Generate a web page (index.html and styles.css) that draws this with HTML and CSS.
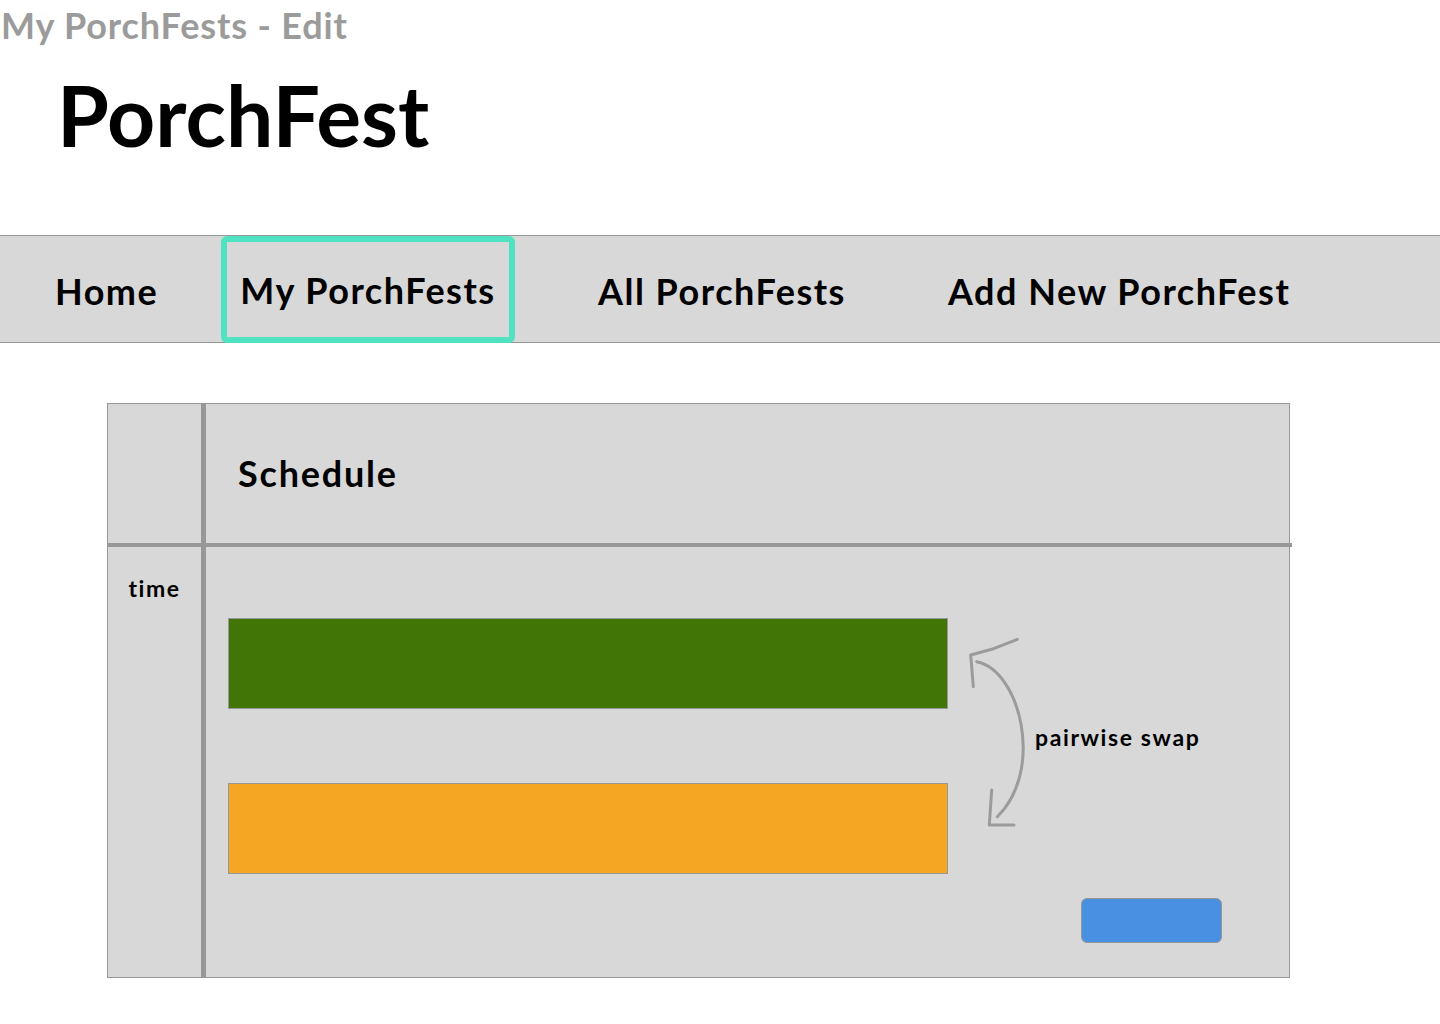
FILE: index.html
```html
<!DOCTYPE html>
<html>
<head>
<meta charset="utf-8">
<title>My PorchFests - Edit</title>
<link rel="stylesheet" href="styles.css">
</head>
<body>
<div class="page-label">My PorchFests - Edit</div>
<h1 class="brand">PorchFest</h1>
<nav class="nav">
  <a class="nav-item nav-home">Home</a>
  <a class="nav-item nav-mine active">My PorchFests</a>
  <a class="nav-item nav-all">All PorchFests</a>
  <a class="nav-item nav-add">Add New PorchFest</a>
</nav>
<section class="card">
  <div class="card-head">
    <div class="side-cell"></div>
    <div class="main-cell head-cell"><h2 class="card-title">Schedule</h2></div>
  </div>
  <div class="card-body">
    <div class="side-cell"><span class="time-label">time</span></div>
    <div class="main-cell body-cell">
      <div class="swap-row">
        <div class="bars">
          <div class="slot slot-green"></div>
          <div class="slot slot-orange"></div>
        </div>
        <svg class="swap-arrow" width="70" height="205" viewBox="0 0 70 205" fill="none" stroke="#9b9b9b" stroke-width="3" stroke-linecap="round" stroke-linejoin="round">
          <path d="M16.7 31.7 C60 40, 85 140, 37.3 186.7"/>
          <path d="M13.3 56.7 L10.7 25 L31.7 19.3 L57.3 9.3"/>
          <path d="M31.7 160 L29.3 195 L54 195"/>
        </svg>
        <span class="swap-label">pairwise swap</span>
      </div>
      <div class="actions">
        <button class="save-btn" type="button"></button>
      </div>
    </div>
  </div>
</section>
</body>
</html>
```

FILE: styles.css
```css
html, body {
  margin: 0;
  padding: 0;
  background: #ffffff;
}
body {
  font-family: Lato, "Open Sans", sans-serif;
  font-weight: 700;
  color: #000;
  width: 1440px;
}
.page-label {
  color: #9b9b9b;
  font-size: 36px;
  line-height: 43px;
  margin: 4px 0 0 1px;
  letter-spacing: 0.85px;
  white-space: nowrap;
}
.brand {
  font-size: 84px;
  line-height: 101px;
  font-weight: 700;
  margin: 17px 0 0 57px;
  letter-spacing: 0;
}
.nav {
  margin-top: 70px;
  height: 106px;
  background: #d8d8d8;
  border-top: 1px solid #979797;
  border-bottom: 1px solid #979797;
  display: flex;
  align-items: stretch;
}
.nav-item {
  display: flex;
  align-items: center;
  padding-top: 4px;
  font-size: 36px;
  color: #000;
  box-sizing: border-box;
  white-space: nowrap;
  letter-spacing: 1.5px;
}
.nav-home { margin-left: 55px; width: 103px; }
.nav-mine { margin-left: 63px; }
.nav-all { margin-left: 83px; width: 242px; }
.nav-add { margin-left: 108px; width: 342px; }
.active {
  border: 6px solid #50e3c2;
  border-radius: 6px;
  padding: 0 4px;
  margin-bottom: -1px;
  width: 294px;
  justify-content: center;
}
.card {
  margin: 60px 0 0 107px;
  width: 1183px;
  height: 575px;
  box-sizing: border-box;
  background: #d8d8d8;
  border: 1px solid #979797;
  display: flex;
  flex-direction: column;
}
.card-head {
  display: flex;
  height: 139px;
  border-bottom: 4px solid #979797;
  margin-right: -3px;
}
.card-body {
  display: flex;
  flex: 1;
}
.side-cell {
  width: 93px;
  flex: none;
  border-right: 5px solid #979797;
  display: flex;
  justify-content: center;
}
.main-cell {
  flex: 1;
}
.head-cell {
  display: flex;
  align-items: center;
  padding: 0 0 2px 32px;
}
.card-title {
  margin: 0;
  font-size: 36px;
  font-weight: 700;
  letter-spacing: 1.8px;
}
.time-label {
  font-size: 23px;
  line-height: 26px;
  margin-top: 28px;
  letter-spacing: 1.5px;
}
.body-cell {
  display: flex;
  flex-direction: column;
  padding: 71px 0 0 22px;
}
.swap-row {
  display: flex;
  align-items: center;
}
.bars {
  display: flex;
  flex-direction: column;
  gap: 74px;
}
.slot {
  width: 720px;
  height: 91px;
  box-sizing: border-box;
  border: 1px solid #979797;
}
.slot-green { background: #417505; }
.slot-orange { background: #f5a623; }
.swap-arrow {
  flex: none;
  align-self: flex-start;
  margin: 12px 0 0 12px;
}
.swap-label {
  font-size: 23px;
  line-height: 28px;
  margin-left: 5px;
  margin-bottom: 18px;
  white-space: nowrap;
  letter-spacing: 1.6px;
}
.actions {
  display: flex;
  justify-content: flex-end;
  margin: 24px 67px 0 0;
}
.save-btn {
  width: 141px;
  height: 45px;
  background: #4a90e2;
  border: 1px solid #979797;
  border-radius: 6px;
  padding: 0;
}
```
